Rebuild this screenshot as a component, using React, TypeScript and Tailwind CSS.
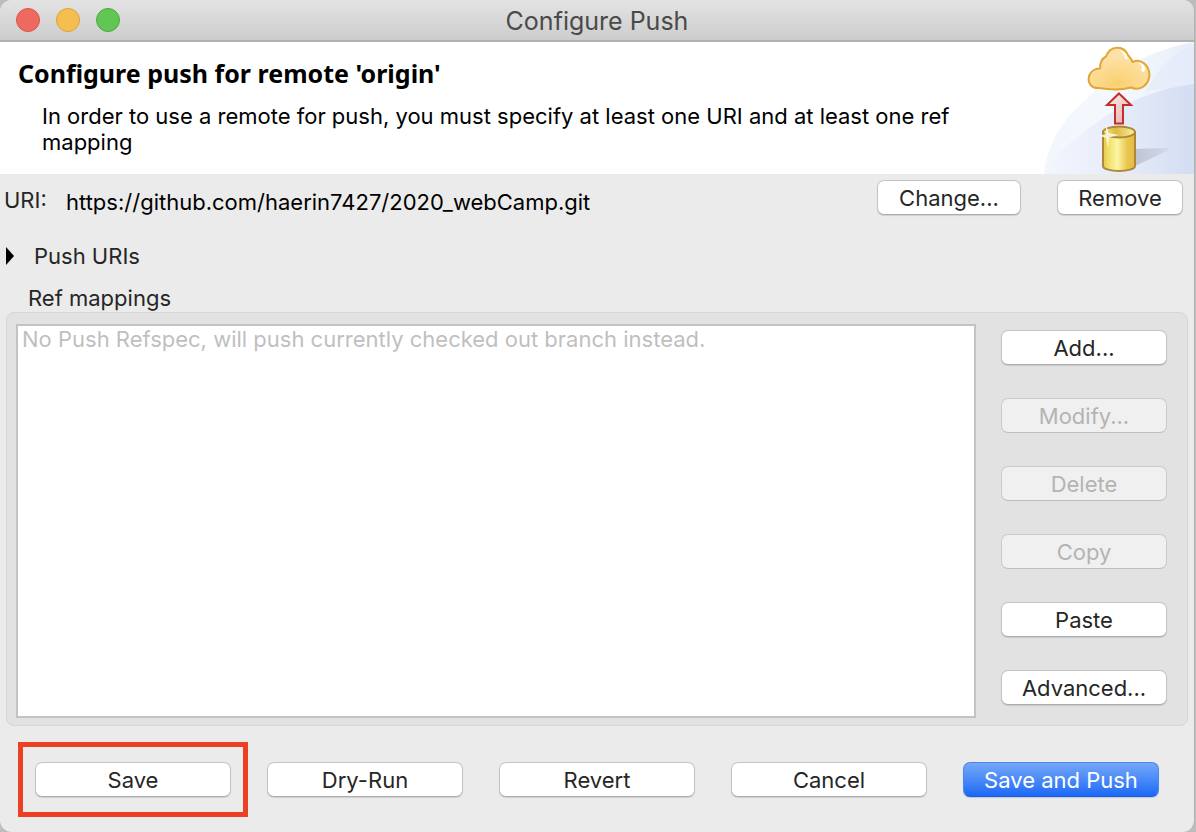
import React from 'react';

interface PushButtonProps {
  label: string;
  className?: string;
  disabled?: boolean;
  primary?: boolean;
}

const PushButton: React.FC<PushButtonProps> = ({ label, className = '', disabled = false, primary = false }) => {
  let look = 'border-[#c4c4c4] border-b-[#adadad] bg-white text-[#262626] shadow-[0_1px_1px_rgba(0,0,0,0.12)]';
  if (disabled) {
    look = 'border-[#cbcbcb] border-b-[#bebebe] bg-[#f0f0f0] text-[#b4b4b4]';
  }
  if (primary) {
    look = 'border-[#4a86ee] border-b-[#1a5fe0] bg-linear-to-b from-[#74a7f7] to-[#1a68f7] text-white shadow-[0_1px_1px_rgba(0,0,0,0.15)]';
  }
  return (
    <button
      type="button"
      disabled={disabled}
      className={`flex h-[35px] items-center justify-center whitespace-nowrap rounded-[7px] border ${look} ${className}`}
    >
      {label}
    </button>
  );
};

const BannerArt: React.FC = () => (
  <svg width="152" height="132" viewBox="0 0 152 132" className="shrink-0" aria-hidden="true">
    <defs>
      <linearGradient id="outerArc" x1="0" y1="0" x2="1" y2="0">
        <stop offset="0" stopColor="#f3f6fc" />
        <stop offset="0.5" stopColor="#f5f8fd" />
        <stop offset="1" stopColor="#e8eef9" />
      </linearGradient>
      <linearGradient id="innerArc" x1="0" y1="0" x2="1" y2="0">
        <stop offset="0" stopColor="#f3f6fd" />
        <stop offset="0.5" stopColor="#e6ecf9" />
        <stop offset="1" stopColor="#d3ddf3" />
      </linearGradient>
      <radialGradient id="cloudFill" cx="0.48" cy="0.85" r="0.65">
        <stop offset="0" stopColor="#fad070" />
        <stop offset="1" stopColor="#fde2a8" />
      </radialGradient>
      <linearGradient id="arrowFill" x1="0" y1="0" x2="1" y2="1">
        <stop offset="0" stopColor="#fdf3f3" />
        <stop offset="1" stopColor="#e7a9a9" />
      </linearGradient>
      <linearGradient id="diskFill" x1="0" y1="0" x2="1" y2="0">
        <stop offset="0" stopColor="#e6c945" />
        <stop offset="0.2" stopColor="#f3e272" />
        <stop offset="0.45" stopColor="#faf6a3" />
        <stop offset="0.75" stopColor="#e9c650" />
        <stop offset="1" stopColor="#e8b945" />
      </linearGradient>
      <linearGradient id="diskTop" x1="0" y1="0" x2="1" y2="0">
        <stop offset="0" stopColor="#f5e78a" />
        <stop offset="0.4" stopColor="#dcbb42" />
        <stop offset="1" stopColor="#faf3a0" />
      </linearGradient>
      <linearGradient id="shadowFill" x1="0" y1="0" x2="1" y2="0">
        <stop offset="0" stopColor="#bfc4d1" />
        <stop offset="1" stopColor="#d3daeb" />
      </linearGradient>
    </defs>
    <path d="M2 132C6 98 24 74 45 57C75 24 115 7 152 0V132Z" fill="url(#outerArc)" />
    <path d="M104 49C115 28 130 11 152 3V45Z" fill="#e3eaf8" opacity="0.6" />
    <path d="M2 132C16 108 28 101 38 94C70 64 115 46 152 42V132Z" fill="url(#innerArc)" />
    <path d="M93 107L122 106Q131 106 125 109L93 124Z" fill="url(#shadowFill)" />

    <path
      d="M57 46C43 47 43 27 58 26.500C58 19 61 16 64 14.500C68 3 82 3 86 13C88 16 90 17 90.500 20C99 16 107 23 107.500 33C107 42 99 50 89 45.500C80 48 66 47.500 57 46Z"
      fill="url(#cloudFill)"
      stroke="#e2a636"
      strokeWidth="2"
      strokeLinejoin="round"
    />
    <path d="M77 8C82 9 85 12 86 17L83 17C83 13 80 10 77 8Z" fill="#fff" />
    <path d="M96 20.500C102 21 104.500 26 102 30L99 29C101 25 99 22 96 20.500Z" fill="#fff" />

    <path
      d="M77 51.500L89 63H81V81.500H73V63H65Z"
      fill="url(#arrowFill)"
      stroke="#c22e28"
      strokeWidth="2"
    />

    <path d="M61 90V124C61 130.500 93 130.500 93 124V90Z" fill="url(#diskFill)" stroke="#b08638" strokeWidth="2" />
    <ellipse cx="77" cy="90" rx="16" ry="5.500" fill="url(#diskTop)" stroke="#b08638" strokeWidth="2" />
    <path d="M64 81L66.500 91L77 93L67 95.500L66 106L64 95.500L55 94L64 92Z" fill="#fffde8" opacity="0.85" />
  </svg>
);

const mappingActions = [
  { label: 'Add...', disabled: false },
  { label: 'Modify...', disabled: true },
  { label: 'Delete', disabled: true },
  { label: 'Copy', disabled: true },
  { label: 'Paste', disabled: false },
  { label: 'Advanced...', disabled: false },
];

const App: React.FC = () => {
  return (
    <div className="h-screen bg-[#bdbdbd] pr-px font-[Inter,sans-serif] text-[22px] leading-[26px] text-[#262626]">
      <div className="flex h-full flex-col overflow-hidden rounded-xl border-r border-[#b4b4b4] bg-[#ebebeb]">
        <header className="grid h-[42px] shrink-0 grid-cols-[1fr_auto_1fr] items-center border-b-2 border-[#b1b1b1] bg-linear-to-b from-[#e3e3e3] to-[#cdcdcd] px-4">
          <div className="flex gap-4">
            <button type="button" aria-label="Close" className="size-6 rounded-full border border-[#d9564c] bg-[#ee6a5f]" />
            <button type="button" aria-label="Minimize" className="size-6 rounded-full border border-[#d9a13d] bg-[#f5bf4f]" />
            <button type="button" aria-label="Zoom" className="size-6 rounded-full border border-[#50a73f] bg-[#62c655]" />
          </div>
          <h1 className="pt-0.5 text-[25px] text-[#4a4a4a]">Configure Push</h1>
        </header>

        <section className="flex h-[132px] shrink-0 justify-between bg-white text-black">
          <div className="pt-[15px] pl-[18px]">
            <h2 className="font-['Noto_Sans',sans-serif] text-[25px] leading-8 font-bold">Configure push for remote 'origin'</h2>
            <p className="mt-3.5 max-w-[960px] pl-6">
              In order to use a remote for push, you must specify at least one URI and at least one ref mapping
            </p>
          </div>
          <BannerArt />
        </section>

        <main className="flex min-h-0 flex-1 flex-col">
          <div className="flex items-center pt-1.5 pr-[11px] pl-1">
            <label htmlFor="uri" className="w-[62px] pt-1">URI:</label>
            <input
              id="uri"
              readOnly
              defaultValue="https://github.com/haerin7427/2020_webCamp.git"
              className="min-w-0 flex-1 bg-transparent pt-2 text-black outline-none"
            />
            <PushButton label="Change..." className="w-[144px]" />
            <PushButton label="Remove" className="ml-9 w-[126px]" />
          </div>

          <button type="button" aria-expanded="false" className="mt-7 flex items-center gap-5 self-start pl-1.5">
            <svg width="8" height="18" viewBox="0 0 8 18" aria-hidden="true">
              <path d="M0 0L8 9L0 18Z" fill="#000" />
            </svg>
            Push URIs
          </button>

          <h3 className="mt-4 pb-px pl-7">Ref mappings</h3>
          <div className="mx-1.5 flex min-h-0 flex-1 gap-[25px] rounded-lg border border-[#d6d6d6] bg-[#e2e2e2] pt-[11px] pr-5 pb-[7px] pl-[9px]">
            <div className="flex-1 border-2 border-[#c3c3c3] bg-white px-1 text-[#bfbfbf]">
              No Push Refspec, will push currently checked out branch instead.
            </div>
            <div className="flex w-[166px] flex-col gap-[33px] pt-1.5">
              {mappingActions.map((action) => (
                <PushButton key={action.label} label={action.label} disabled={action.disabled} />
              ))}
            </div>
          </div>
        </main>

        <footer className="grid h-[106px] shrink-0 grid-cols-5 content-start gap-9 px-[35px] pt-9">
          <div className="relative">
            <PushButton label="Save" className="w-full" />
            <div className="pointer-events-none absolute -inset-x-[17px] -inset-y-5 border-[5px] border-[#ec4024]" />
          </div>
          <PushButton label="Dry-Run" />
          <PushButton label="Revert" />
          <PushButton label="Cancel" />
          <PushButton label="Save and Push" primary />
        </footer>
      </div>
    </div>
  );
};

export default App;
